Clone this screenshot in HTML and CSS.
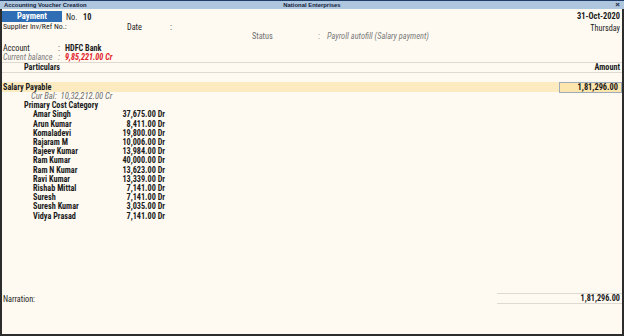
FILE: index.html
```html
<!DOCTYPE html>
<html lang="en">
<head>
    <meta charset="utf-8" />
    <title>Accounting Voucher Creation</title>
    <link rel="stylesheet" href="styles.css">
</head>
<body>
    <div class="window">
        <div class="titlebar">
            <span class="tb-title">Accounting Voucher Creation</span>
            <span class="tb-company">National Enterprises</span>
            <span class="tb-close">×</span>
        </div>

        <div class="body">
            <div class="head">
                <div class="head-main">
                    <div class="vch-row">
                        <span class="vch-type">Payment</span>
                        <span class="vch-no-label">No.</span>
                        <span class="bold">10</span>
                    </div>
                    <div class="ref-row">
                        <span class="ref-label">Supplier Inv/Ref No.:</span>
                        <span class="date-label">Date</span>
                        <span>:</span>
                    </div>
                    <div class="status-row">
                        <span class="status-label">Status</span>
                        <span class="status-colon">:</span>
                        <span class="muted status-val">Payroll autofill (Salary payment)</span>
                    </div>
                    <div class="acc-row">
                        <span class="acc-label">Account</span>
                        <span class="acc-colon">:</span>
                        <span class="bold">HDFC Bank</span>
                    </div>
                    <div class="acc-row">
                        <span class="acc-label muted">Current balance</span>
                        <span class="acc-colon muted">:</span>
                        <span class="balance">9,85,221.00 Cr</span>
                    </div>
                </div>
                <div class="head-date">
                    <div class="date">31-Oct-2020</div>
                    <div class="day">Thursday</div>
                </div>
            </div>

            <div class="col-head">
                <span>Particulars</span>
                <span>Amount</span>
            </div>

            <div class="entry">
                <span class="ledger">Salary Payable</span>
                <span class="entry-amount">1,81,296.00</span>
            </div>

            <div class="details">
                <div class="cur-bal">Cur Bal:&nbsp; 10,32,212.00 Cr</div>
                <div class="cat">Primary Cost Category</div>
                <div class="cc-list">
                    <span>Amar Singh</span><span>37,675.00 Dr</span>
                    <span>Arun Kumar</span><span>8,411.00 Dr</span>
                    <span>Komaladevi</span><span>19,800.00 Dr</span>
                    <span>Rajaram M</span><span>10,006.00 Dr</span>
                    <span>Rajeev Kumar</span><span>13,984.00 Dr</span>
                    <span>Ram Kumar</span><span>40,000.00 Dr</span>
                    <span>Ram N Kumar</span><span>13,623.00 Dr</span>
                    <span>Ravi Kumar</span><span>13,339.00 Dr</span>
                    <span>Rishab Mittal</span><span>7,141.00 Dr</span>
                    <span>Suresh</span><span>7,141.00 Dr</span>
                    <span>Suresh Kumar</span><span>3,035.00 Dr</span>
                    <span>Vidya Prasad</span><span>7,141.00 Dr</span>
                </div>
            </div>

            <div class="footer">
                <span class="narration">Narration:</span>
                <span class="total">1,81,296.00</span>
            </div>
        </div>
    </div>
</body>
</html>
```

FILE: styles.css
```css
* {
    margin: 0;
    padding: 0;
    box-sizing: border-box;
}

body {
    font-family: "Roboto Condensed", "Liberation Sans", Arial, sans-serif;
    font-size: 8.2px;
    color: #1b1b1b;
    background: #fefaf2;
    white-space: nowrap;
}

.window {
    width: 624px;
    height: 336px;
    display: flex;
    flex-direction: column;
}

.titlebar {
    height: 9px;
    background: #aec7df;
    border-top: 1px solid #1f3d69;
    display: grid;
    grid-template-columns: 1fr auto 1fr;
    align-items: center;
    padding: 0 4px;
    font-family: "Liberation Sans", Arial, sans-serif;
    font-size: 5.9px;
    font-weight: bold;
    color: #14213a;
    line-height: 8px;
}

.tb-close {
    justify-self: end;
    font-size: 8px;
}

.body {
    flex: 1;
    display: flex;
    flex-direction: column;
    border-left: 2px solid #2c2c2c;
    border-right: 2px solid #2c2c2c;
    border-bottom: 2px solid #2c2c2c;
    background: #fefaf2;
}

.bold {
    font-weight: bold;
}

.muted {
    color: #7b7b7b;
    font-style: italic;
}

/* header block */
.head {
    display: flex;
    justify-content: space-between;
    padding-top: 2px;
    height: 53px;
}

.head-main {
    flex: 1;
}

.vch-row {
    display: flex;
    align-items: center;
    height: 11px;
}

.vch-type {
    width: 60px;
    height: 11px;
    line-height: 11px;
    background: #2f6db5;
    color: #fff;
    font-weight: bold;
    font-size: 8.6px;
    text-align: center;
    margin-right: 4px;
}

.vch-no-label {
    width: 17px;
}

.ref-row {
    display: flex;
    height: 10px;
    line-height: 10px;
    padding-left: 1px;
}

.ref-label {
    width: 124px;
    font-size: 7.8px;
}

.date-label {
    width: 43px;
}

.status-row {
    display: flex;
    height: 9px;
    line-height: 9px;
    padding-left: 250px;
    margin-bottom: 3px;
}

.status-label {
    width: 66px;
    color: #6f6f6f;
}

.status-colon {
    width: 9px;
    color: #7b7b7b;
}

.status-val {
    font-size: 8.4px;
}

.acc-row {
    display: flex;
    height: 9px;
    line-height: 9px;
    padding-left: 1px;
}

.acc-label {
    width: 55px;
}

.acc-colon {
    width: 7px;
}

.balance {
    color: #e0222b;
    font-weight: bold;
    font-style: italic;
}

.head-date {
    text-align: right;
    padding-right: 2px;
}

.date {
    font-weight: bold;
    font-size: 8.4px;
    line-height: 11px;
}

.day {
    line-height: 13px;
}

/* column header */
.col-head {
    display: flex;
    justify-content: space-between;
    height: 11px;
    line-height: 9px;
    border-top: 1px solid #dedad2;
    border-bottom: 1px solid #dedad2;
    font-weight: bold;
    padding: 0 2px 0 22px;
}

/* ledger entry */
.entry {
    margin-top: 9px;
    height: 10px;
    display: flex;
    justify-content: space-between;
    align-items: center;
    background: #fcebc1;
    font-weight: bold;
    padding-left: 1px;
}

.entry-amount {
    width: 63px;
    height: 11px;
    line-height: 9px;
    background: #fde5ae;
    border: 1px solid #9eaab8;
    text-align: right;
    padding-right: 3px;
    font-size: 8.4px;
}

.details {
    line-height: 9.2px;
}

.cur-bal {
    padding-left: 29px;
    color: #6f6f6f;
    font-style: italic;
    font-size: 8.6px;
}

.cat {
    padding-left: 22px;
    font-weight: bold;
}

.cc-list {
    display: grid;
    grid-template-columns: 82px 50px;
    padding-left: 31px;
    font-weight: bold;
}

.cc-list span:nth-child(even) {
    text-align: right;
}

/* narration */
.footer {
    margin-top: auto;
    margin-bottom: 30px;
    display: flex;
    justify-content: space-between;
    align-items: center;
    padding-left: 1px;
}

.total {
    width: 125px;
    height: 11px;
    line-height: 9px;
    border-top: 1px solid #dedad2;
    border-bottom: 1px solid #dedad2;
    text-align: right;
    font-weight: bold;
    padding-right: 2px;
}
```
